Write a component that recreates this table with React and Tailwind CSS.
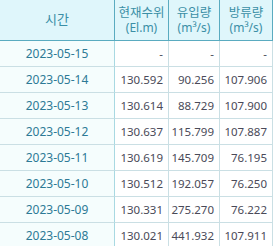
const rows = [
  ["2023-05-15", "-", "-", "-"],
  ["2023-05-14", "130.592", "90.256", "107.906"],
  ["2023-05-13", "130.614", "88.729", "107.900"],
  ["2023-05-12", "130.637", "115.799", "107.887"],
  ["2023-05-11", "130.619", "145.709", "76.195"],
  ["2023-05-10", "130.512", "192.057", "76.250"],
  ["2023-05-09", "130.331", "275.270", "76.222"],
  ["2023-05-08", "130.021", "441.932", "107.911"],
];

const font = { fontFamily: '"Noto Sans", "Noto Sans CJK KR", sans-serif' };

export default function App() {
  return (
    <div className="w-[274px] h-[246px] overflow-hidden bg-white" style={font}>
      <div className="grid grid-cols-[115px_54px_51px_53px] text-[12px]">
        <div className="h-[41px] bg-[#dff6fb] border-b border-r border-[#5aabc0] flex items-center justify-center text-[#3b8fa6] text-[13px]">
          시간
        </div>
        <div className="h-[41px] bg-[#dff6fb] border-b border-r border-[#5aabc0] flex flex-col items-center justify-center text-[#3b8fa6] leading-[15px]">
          <span className="text-[12.5px]">현재수위</span>
          <span>(El.m)</span>
        </div>
        <div className="h-[41px] bg-[#dff6fb] border-b border-r border-[#5aabc0] flex flex-col items-center justify-center text-[#3b8fa6] leading-[15px]">
          <span className="text-[12.5px]">유입량</span>
          <span>(m³/s)</span>
        </div>
        <div className="h-[41px] bg-[#dff6fb] border-b border-r border-[#5aabc0] flex flex-col items-center justify-center text-[#3b8fa6] leading-[15px]">
          <span className="text-[12.5px]">방류량</span>
          <span>(m³/s)</span>
        </div>
        {rows.map((r) => (
          <Row key={r[0]} r={r} />
        ))}
      </div>
    </div>
  );
}

function Row({ r }) {
  return (
    <>
      <div className="h-[26px] bg-[#f5fdfd] border-b border-r border-b-[#cadfe4] border-r-[#a9d9e2] flex items-center justify-center text-[#2d7a96]">
        {r[0]}
      </div>
      <div className="h-[26px] bg-white border-b border-r border-[#cadfe4] flex items-center justify-end pr-[5px] text-[#4a4a58] text-[11.5px]">
        {r[1]}
      </div>
      <div className="h-[26px] bg-white border-b border-r border-[#cadfe4] flex items-center justify-end pr-[5px] text-[#4a4a58] text-[11.5px]">
        {r[2]}
      </div>
      <div className="h-[26px] bg-white border-b border-r border-[#cadfe4] flex items-center justify-end pr-[5px] text-[#4a4a58] text-[11.5px]">
        {r[3]}
      </div>
    </>
  );
}
